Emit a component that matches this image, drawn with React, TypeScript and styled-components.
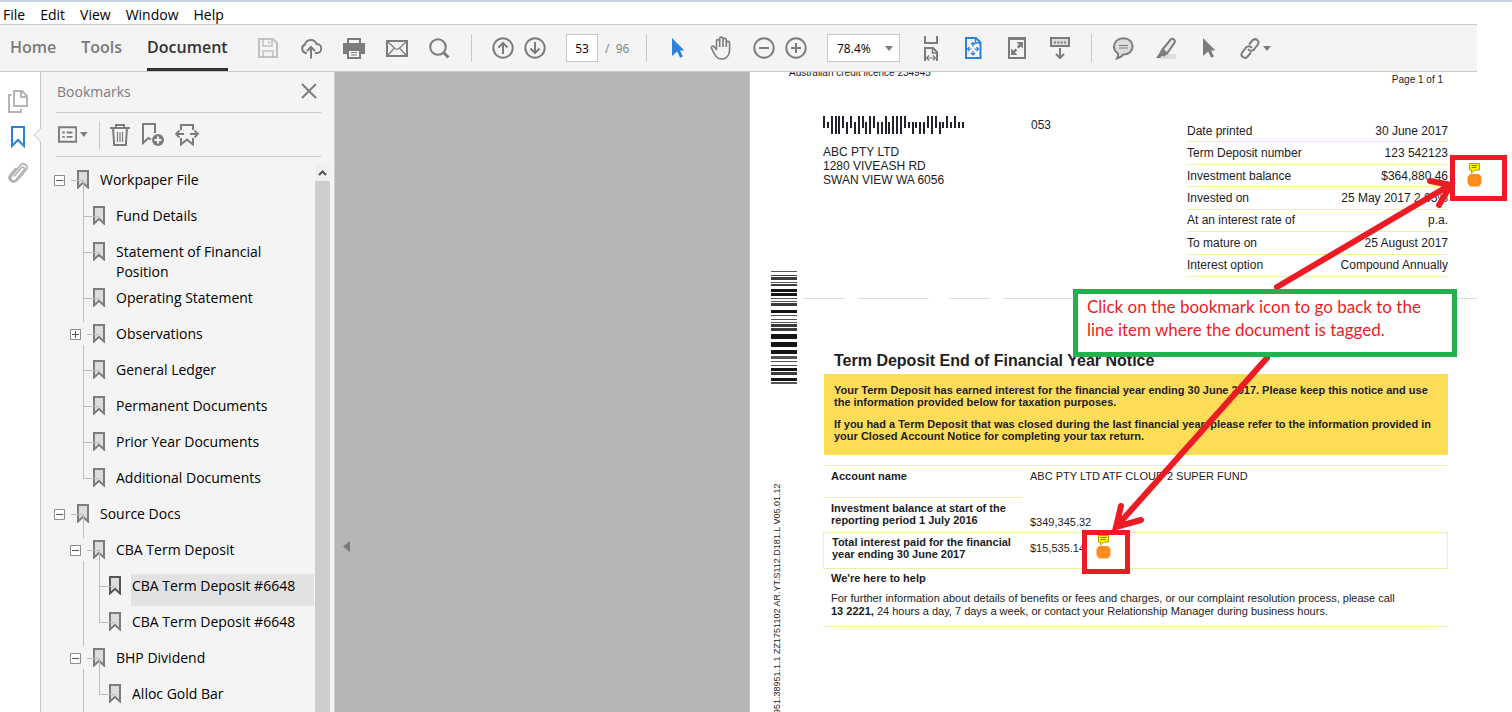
import React from "react";
import styled, { createGlobalStyle, css } from "styled-components";

const UI = '"Open Sans", "Noto Sans", sans-serif';
const DOC = '"Liberation Sans", Arial, sans-serif';

const Global = createGlobalStyle`
  * { box-sizing: border-box; }
  body { margin: 0; background: #fff; font-family: ${UI}; color: #1a1a1a; }
  button { border: 0; padding: 0; background: none; font: inherit; color: inherit; }
  a { color: inherit; text-decoration: none; }
  ul { list-style: none; margin: 0; padding: 0; }
  svg { display: block; }
`;

const Shell = styled.div`
  display: flex;
  flex-direction: column;
  height: 100vh;
  border-top: 2px solid #c7d0e3;
  overflow: hidden;
`;

const MenuBar = styled.nav`
  display: flex;
  gap: 15px;
  height: 22px;
  padding-left: 3px;
  flex: none;
`;
const MenuItem = styled.button`
  font-size: 14px;
  line-height: 26px;
  color: #000;
`;

const Toolbar = styled.header`
  display: flex;
  align-items: center;
  flex: none;
  height: 48px;
  margin-right: 35px;
  background: #f4f4f4;
  border-top: 1px solid #c8c8c8;
  border-bottom: 1px solid #c8c8c8;
`;
const Tabs = styled.div`
  display: flex;
  gap: 25px;
  width: 246px;
  padding-left: 10px;
  align-self: stretch;
`;
const Tab = styled.button<{ $active?: boolean }>`
  font-size: 16px;
  font-weight: 600;
  color: ${(p) => (p.$active ? "#323232" : "#7a7a7a")};
  border-bottom: 3px solid ${(p) => (p.$active ? "#323232" : "transparent")};
`;
const ToolGroup = styled.div`
  display: flex;
  align-items: center;
  color: #7c7c7c;
`;
const ZoomGroup = styled(ToolGroup)`
  margin-left: 5px;
`;
const Tool = styled.button<{ $w?: number; $color?: string }>`
  display: flex;
  align-items: center;
  justify-content: center;
  gap: 3px;
  width: ${(p) => p.$w ?? 43}px;
  height: 28px;
  color: ${(p) => p.$color ?? "#7c7c7c"};
`;
const Divider = styled.div<{ $l?: number; $r?: number }>`
  width: 1px;
  height: 28px;
  margin: 0 ${(p) => p.$r ?? 10}px 0 ${(p) => p.$l ?? 10}px;
  background: #c8c8c8;
`;
const PageBox = styled.input`
  width: 32px;
  height: 28px;
  margin-left: 15px;
  padding: 0;
  border: 1px solid #c8c8c8;
  background: #fff;
  text-align: center;
  font: 12px ${UI};
  color: #000;
`;
const PageTotal = styled.span`
  width: 31px;
  margin-left: 7px;
  font-size: 12px;
  color: #7c7c7c;
  white-space: pre;
`;
const ZoomField = styled.div`
  position: relative;
  display: flex;
  margin: 0 9px 0 15px;
  svg { position: absolute; right: 7px; top: 12px; pointer-events: none; }
`;
const ZoomSelect = styled.select`
  appearance: none;
  width: 73px;
  height: 28px;
  padding: 0 0 0 9px;
  border: 1px solid #c8c8c8;
  border-radius: 0;
  background: #fff;
  font: 12px ${UI};
  color: #000;
`;

const Workspace = styled.div`
  display: flex;
  flex: 1;
  min-height: 0;
`;
const Rail = styled.nav`
  position: relative;
  display: flex;
  flex-direction: column;
  align-items: center;
  flex: none;
  width: 41px;
  padding: 11px 4px 0 0;
  border-right: 1px solid #c8c8c8;
`;
const RailButton = styled.button<{ $active?: boolean }>`
  display: flex;
  align-items: center;
  justify-content: center;
  width: 26px;
  height: 36px;
  color: ${(p) => (p.$active ? "#2d82d6" : "#b4b4b4")};
`;
const Notch = styled.svg`
  position: absolute;
  right: -1px;
  top: 56px;
`;

const Panel = styled.aside`
  display: flex;
  flex-direction: column;
  flex: none;
  width: 294px;
  background: #f4f4f4;
  border-right: 1px solid #d0d0d0;
`;
const PanelHead = styled.div`
  display: flex;
  align-items: center;
  justify-content: space-between;
  height: 41px;
  margin: 0 13px 0 15px;
  padding: 0 4px 2px 1px;
  border-bottom: 1px solid #c8c8c8;
  color: #7c7c7c;
`;
const PanelTitle = styled.h2`
  margin: 0;
  font-size: 14px;
  font-weight: 400;
`;
const PanelTools = styled.div`
  display: flex;
  align-items: center;
  height: 44px;
  margin: 0 13px 0 15px;
  padding-left: 2px;
  border-bottom: 1px solid #c8c8c8;
`;
const TreeArea = styled.div`
  display: flex;
  flex: 1;
  min-height: 0;
  margin-top: 7px;
`;
const Tree = styled.div`
  flex: 1;
  padding: 4px 1px 0 13px;
  overflow: hidden;
  font-size: 14px;
`;
const ScrollTrack = styled.div`
  display: flex;
  flex-direction: column;
  width: 15px;
  margin-right: 4px;
  background: #cdcdcd;
`;
const ScrollUp = styled.button`
  display: flex;
  align-items: center;
  justify-content: center;
  height: 17px;
  background: #f0f0f0;
  color: #505050;
`;

const line = "#bdbdbd";
const Branch = styled.ul<{ $nested?: boolean }>`
  position: relative;
  ${(p) =>
    p.$nested &&
    css`
      padding-left: 16px;
      &::before {
        content: "";
        position: absolute;
        left: 29px;
        top: -24px;
        width: 1px;
        height: 24px;
        background: ${line};
      }
    `}
`;
const Node = styled.li<{ $root: boolean; $open: boolean; $last: boolean }>`
  position: relative;
  ${(p) =>
    !p.$root &&
    css`
      &::before {
        content: "";
        position: absolute;
        left: 13px;
        top: ${p.$open ? 23 : 0}px;
        width: 1px;
        ${p.$last ? "height: 13px;" : "bottom: 0;"}
        background: ${line};
      }
    `}
`;
const NodeRow = styled.div<{ $open: boolean }>`
  position: relative;
  display: flex;
  padding-bottom: 4px;
  &::after {
    content: "";
    position: absolute;
    left: ${(p) => (p.$open ? 17 : 13)}px;
    top: 12px;
    width: ${(p) => (p.$open ? 12 : 16)}px;
    height: 1px;
    background: ${line};
  }
`;
const Slot = styled.span`
  flex: none;
  width: 23px;
  padding-top: 7px;
`;
const Toggle = styled.button`
  display: block;
`;
const Label = styled.a<{ $selected?: boolean }>`
  flex: 1;
  min-height: 32px;
  margin-left: 10px;
  padding: 2px 12px 0 1px;
  line-height: 20px;
  color: #000;
  background: ${(p) => (p.$selected ? "#e2e2e2" : "transparent")};
`;

const Backdrop = styled.div`
  display: flex;
  align-items: flex-start;
  flex: 1;
  padding: 469px 0 0 8px;
  background: #b6b6b6;
`;

const rule = "#edf29a";
const Sheet = styled.main`
  position: relative;
  flex: 0 0 763px;
  padding-right: 64px;
  background: #fff;
  border-left: 1px solid #c8c8c8;
  overflow: hidden;
  font-family: ${DOC};
  font-size: 12px;
  color: #1c1c24;
`;
const SheetTop = styled.div`
  display: flex;
  justify-content: space-between;
  height: 20px;
  padding: 0 5px 0 39px;
  font-size: 10px;
`;
const Licence = styled.span`
  margin-top: -5px;
`;
const PageOf = styled.span`
  line-height: 16px;
`;
const SheetBody = styled.div`
  display: flex;
`;
const Margin = styled.div`
  flex: none;
  width: 73px;
  padding: 178px 0 0 21px;
`;
const Serial = styled.div`
  margin-top: 100px;
  writing-mode: vertical-rl;
  transform: rotate(180deg);
  font-size: 9px;
  line-height: 12px;
  height: 240px;
  white-space: nowrap;
  text-align: right;
`;
const Content = styled.div`
  flex: 1;
`;
const Letterhead = styled.div`
  display: flex;
  justify-content: space-between;
  height: 206px;
  padding-top: 24px;
`;
const Address = styled.address`
  width: 208px;
  font-style: normal;
  line-height: 14px;
  svg { margin-bottom: 11px; }
`;
const Route = styled.span`
  flex: 1;
  padding-top: 2px;
`;
const Facts = styled.table`
  width: 261px;
  height: 157px;
  margin-top: 4px;
  border-spacing: 0;
  th, td {
    padding: 0;
    border-bottom: 1px solid ${rule};
    font-weight: 400;
    text-align: left;
  }
  td { text-align: right; }
`;
const NoticeTitle = styled.h1`
  margin: 0;
  padding: 52px 0 3px 11px;
  font-size: 16px;
  line-height: 21px;
  color: #222;
`;
const Notice = styled.div`
  height: 81px;
  margin-left: 1px;
  padding: 10px;
  background: #fddd58;
  font-size: 11px;
  font-weight: 700;
  line-height: 12px;
  white-space: nowrap;
  p { margin: 0 0 10px; }
`;
const Account = styled.table`
  width: 100%;
  margin-top: 10px;
  border-spacing: 0;
  font-size: 11px;
  line-height: 12px;
  th { width: 199px; text-align: left; }
`;
const AccountRow = styled.tr<{ $h: number; $kind?: "short" | "boxed" }>`
  height: ${(p) => p.$h}px;
  th, td {
    padding: 4px 0 0 8px;
    border-top: 1px solid ${rule};
    vertical-align: top;
  }
  ${(p) =>
    p.$kind === "short" &&
    css`
      td { border-top-color: transparent; padding-top: 18px; }
    `}
  ${(p) =>
    p.$kind === "boxed" &&
    css`
      th, td { border-bottom: 1px solid ${rule}; padding-top: 3px; }
      th { border-left: 1px solid ${rule}; }
      td { border-right: 1px solid ${rule}; padding-top: 9px; }
    `}
`;
const Help = styled.section`
  padding: 3px 0 8px 8px;
  border-bottom: 1px solid ${rule};
  font-size: 11px;
  line-height: 13px;
  h2 { margin: 0 0 7px; font-size: 11px; line-height: 13px; }
  p { margin: 0; }
`;

const Overlay = styled.svg`
  position: absolute;
  left: 0;
  top: 0;
  pointer-events: none;
`;
const Marker = styled.button<{ $x: number; $y: number; $w: number; $h: number; $pad: string }>`
  position: absolute;
  display: flex;
  align-items: flex-start;
  left: ${(p) => p.$x}px;
  top: ${(p) => p.$y}px;
  width: ${(p) => p.$w}px;
  height: ${(p) => p.$h}px;
  padding: ${(p) => p.$pad};
  border: 5px solid #ed1c24;
  background: #fff;
`;
const Callout = styled.div`
  position: absolute;
  left: 323px;
  top: 217px;
  width: 384px;
  height: 68px;
  padding: 1px 9px;
  border: 5px solid #22b14c;
  background: #fff;
  color: #ed1c24;
  font: 17px/23px Lato, sans-serif;
`;

type IconProps = { w: number; h: number; children: React.ReactNode; s?: number };
const Icon = ({ w, h, s = 2, children }: IconProps) => (
  <svg width={w} height={h} viewBox={`0 0 ${w} ${h}`} fill="none" stroke="currentColor" strokeWidth={s} aria-hidden="true">
    {children}
  </svg>
);
const Caret = () => (
  <svg width="8" height="5" viewBox="0 0 8 5" aria-hidden="true">
    <path d="M0 0h8L4 5z" fill="#7c7c7c" />
  </svg>
);
const SaveIcon = () => (
  <Icon w={20} h={20}>
    <path d="M1 1h14l4 4v14H1z" />
    <path d="M5 1v7h9V1M5 19v-6h10v6M11 3v3" strokeWidth={1.5} />
  </Icon>
);
const CloudIcon = () => (
  <Icon w={22} h={21}>
    <path d="M7 15H5.500A4.500 4.500 0 0 1 5 6.500 6 6 0 0 1 16.500 6 4.500 4.500 0 0 1 17 15h-2" />
    <path d="M11 20.500V9M7 13l4-4 4 4" />
  </Icon>
);
const PrintIcon = () => (
  <Icon w={22} h={21}>
    <path d="M4 0h14v5H4zM0 7h22v9h-4v-3H4v3H0z" fill="currentColor" stroke="none" />
    <path d="M5 1h12v5H5z" fill="#f4f4f4" />
    <path d="M1 6h20v9H1z" fill="currentColor" />
    <path d="M5 12h12v8H5z" fill="#f4f4f4" />
    <path d="M8 14.500h6M8 17h6" strokeWidth={1} />
  </Icon>
);
const MailIcon = () => (
  <Icon w={22} h={17}>
    <path d="M1 1h20v15H1z" />
    <path d="M2 2l7 6.500q2 1.500 4 0L20 2M2 15l6.500-7M20 15l-6.500-7" strokeWidth={1.200} />
  </Icon>
);
const SearchIcon = () => (
  <Icon w={21} h={21}>
    <circle cx="9" cy="9" r="7.800" />
    <path d="M14.500 14.500l5 5" strokeWidth={3} />
  </Icon>
);
const Round = ({ d }: { d: string }) => (
  <Icon w={22} h={22}>
    <circle cx="11" cy="11" r="9.700" />
    <path d={d} />
  </Icon>
);
const PointerIcon = () => (
  <svg width="13" height="20" viewBox="0 0 13 20" aria-hidden="true">
    <path d="M0 0l12.500 12.500H8l3 6-2.800 1.300-3-6.300L0 18z" fill="currentColor" />
  </svg>
);
const HandIcon = () => (
  <Icon w={23} h={24} s={1.600}>
    <path d="M6.500 14V5.200a1.600 1.600 0 0 1 3.200 0V11M9.700 5V2.800a1.600 1.600 0 0 1 3.300 0V11M13 4a1.600 1.600 0 0 1 3.300 0v7M16.300 7a1.600 1.600 0 0 1 3.300 0" />
    <path d="M6.500 13.500l-2.300-2.800c-1.200-1.300-3.300-.2-2.700 1.400 1.700 3.800 3.300 7.500 5.800 9.500 2.500 1.800 6.500 1.800 9 0 2.800-2.200 3.300-5.200 3.300-8.500V7" />
  </Icon>
);
const FitWidthIcon = () => (
  <Icon w={16} h={25}>
    <path d="M2 0v7h12V0M2 25V12h8l4 4v9" />
    <path d="M9.500 12v5H14" strokeWidth={1.500} />
    <path d="M4 22h8M6 19.500L3.500 22 6 24.500M10 19.500l2.500 2.500-2.500 2.500" strokeWidth={1.200} />
  </Icon>
);
const FitPageIcon = () => (
  <Icon w={17} h={22}>
    <path d="M1 1h10l4.500 4.500V21H1z" />
    <path d="M10.500 1v5h5" strokeWidth={1.500} />
    <path d="M8 5.500v4M8 14v4M2.500 12h4M9.500 12h4M6 7.500l2-2 2 2M6 16l2 2 2-2M4.500 10l-2 2 2 2M11.500 10l2 2-2 2" strokeWidth={1.200} />
  </Icon>
);
const FullIcon = () => (
  <Icon w={18} h={22}>
    <path d="M1 1h16v20H1z" />
    <path d="M1 1.500h16" strokeWidth={3} />
    <path d="M15 5v6.500L12.700 9.300 10.500 11.500 8.800 9.800 11 7.500 8.500 5zM3 18v-6.500l2.300 2.200 2.200-2.200 1.700 1.700L7 15.500 9.500 18z" fill="currentColor" stroke="none" />
  </Icon>
);
const ScrollIcon = () => (
  <Icon w={20} h={22}>
    <path d="M1 1h18v8H1z" fill="#ddd" />
    <path d="M4 5.500h12" strokeDasharray="2 1.300" />
    <path d="M10 11v10M6 17l4 4 4-4" />
  </Icon>
);
const CommentIcon = () => (
  <Icon w={21} h={23}>
    <path d="M10.500 1.200c5.300 0 9 3.700 9 8.300s-3.700 8-9 8c-1.700 1.700-3.800 3.500-6.500 4 1-1.500 1.300-3 1-5-2.300-1.500-4-3.700-4-7 0-4.600 4-8.300 9.500-8.300z" fill="#ddd" />
    <path d="M6 8.500h9M6 11h9" strokeWidth={1.200} />
  </Icon>
);
const PenIcon = () => (
  <Icon w={21} h={22}>
    <path d="M7 17h13v5H2z" fill="#ddd" stroke="none" />
    <path d="M6.500 12.500L14.500 2.800c2.300-2 5.300-.5 4 3L11 16.500z" fill="#e8e8e8" />
    <path d="M5 12.500l6 4.500-2.500 2.500-3-.5-1.500 2H0l3.500-5z" fill="currentColor" stroke="none" />
  </Icon>
);
const LinkIcon = () => (
  <Icon w={20} h={21}>
    <path d="M9 6.500l3.500-4.200c3-3 7.800.8 5.300 4.200l-3.800 5c-2 2-4.500 1.500-6-.5M11 14.500l-3.500 4.200c-3 3-7.800-.8-5.300-4.200L6 9.500c2-2 4.500-1.500 6 .5" />
  </Icon>
);
const PagesIcon = () => (
  <Icon w={20} h={23}>
    <path d="M6 1h8l5 5v10H6zM13 1v6h6M3.500 5H1v17h12v-3" />
  </Icon>
);
const ClipIcon = () => (
  <Icon w={20} h={22}>
    <path d="M6 14.500l7-8.500c2-2 4.500.2 3 2.300l-8 9.500c-3 3-7-.5-4.500-3.800L12 3.500c3.500-4 9 .5 6 4.500l-8.500 10c-4.500 5-10.500-.5-7.500-5L8 6" strokeWidth={1.800} />
  </Icon>
);
const BookmarkIcon = () => (
  <Icon w={14} h={22}>
    <path d="M1 1h12v19l-6-6-6 6z" />
  </Icon>
);
const NodeIcon = ({ dark }: { dark?: boolean }) => (
  <svg width="12" height="21" viewBox="0 0 12 21" fill="#dcdcdc" stroke={dark ? "#555" : "#7c7c7c"} strokeWidth="2" aria-hidden="true">
    <path d="M1 3h10v16.500L6 14.800 1 19.500z" />
  </svg>
);
const ToggleIcon = ({ plus }: { plus?: boolean }) => (
  <svg width="11" height="11" viewBox="0 0 11 11" fill="#fff" aria-hidden="true">
    <path d="M.5.5h10v10H.5z" stroke="#8e8e8e" />
    <path d={plus ? "M2 5.500h7M5.500 2v7" : "M2 5.500h7"} stroke="#555" />
  </svg>
);
const ListIcon = () => (
  <Icon w={20} h={17}>
    <path d="M1 1h18v15H1z" />
    <path d="M9 6.500h6M9 11h6M4.500 6.500h2.500M4.500 11h2.500" />
  </Icon>
);
const TrashIcon = () => (
  <Icon w={20} h={22}>
    <path d="M0 4h20M6 4V1h8v3M3 4l1.200 17h11.600L17 4" />
    <path d="M7.500 8v10M10 8v10M12.500 8v10" strokeWidth={1.200} />
  </Icon>
);
const AddMarkIcon = () => (
  <Icon w={22} h={23}>
    <path d="M9 16.500L6.500 15 1 20V1h12v9" />
    <circle cx="16" cy="17" r="6" fill="currentColor" stroke="none" />
    <path d="M16 13.500v7M12.500 17h7" stroke="#f4f4f4" />
  </Icon>
);
const SpreadIcon = () => (
  <Icon w={24} h={22}>
    <path d="M6 6V1h12v5M6 14v6.500l6-5 6 5V14" />
    <path d="M1 10h8M15 10h8M4.500 6.500L1 10l3.500 3.500M19.500 6.500L23 10l-3.500 3.500" strokeWidth={1.800} />
  </Icon>
);
const TagIcon = () => (
  <svg width="16" height="24" viewBox="0 0 16 24" aria-hidden="true">
    <path d="M2.500.5h10v6.500H8L4.500 10V7h-2z" fill="#fff200" stroke="#b0a000" />
    <path d="M4.500 2.500h6M4.500 4.500h5" stroke="#8a7d00" />
    <path d="M3 11h9l2.500 3v6L12 23.500H3L.5 20v-6z" fill="#ff8c1a" />
  </svg>
);

const bars = "ATFFFADADFADFADDFDFFFATDTDDAFADTATATT".split("");
const PostalCode = () => (
  <svg width="141" height="18" viewBox="0 0 141 18" aria-label="Postal barcode" role="img">
    {bars.map((b, i) => {
      const top = b === "F" || b === "A" ? 0 : 6;
      const end = b === "F" || b === "D" ? 18 : 12;
      return <rect key={i} x={Math.round(i * 3.85)} y={top} width="2" height={end - top} fill="#222230" />;
    })}
  </svg>
);
const stripes: [number, number, number][] = [
  [1, 1, 0], [5, 1, 1], [7, 3, 1], [12, 1, 0], [14, 2, 1], [19, 3, 2], [23, 3, 2], [28, 1, 0], [31, 1, 0], [33, 3, 1],
  [40, 3, 2], [45, 1, 0], [49, 1, 0], [52, 1, 0], [54, 3, 1], [58, 3, 1], [64, 5, 2], [72, 5, 2], [80, 4, 2], [86, 3, 0],
  [91, 1, 0], [95, 1, 0], [98, 3, 2], [102, 3, 1], [108, 3, 2], [112, 2, 0],
];
const SideCode = () => (
  <svg width="26" height="114" viewBox="0 0 26 114" aria-label="Document barcode" role="img">
    {stripes.map(([y, h, t]) => (
      <rect key={y} x="0" y={y} width="26" height={h} fill={["#555", "#3c3c3c", "#151515"][t]} />
    ))}
  </svg>
);

type TreeNode = { label: string; open?: boolean; selected?: boolean; children?: TreeNode[] };
const bookmarks: TreeNode[] = [
  {
    label: "Workpaper File",
    open: true,
    children: [
      { label: "Fund Details" },
      { label: "Statement of Financial Position" },
      { label: "Operating Statement" },
      { label: "Observations", open: false },
      { label: "General Ledger" },
      { label: "Permanent Documents" },
      { label: "Prior Year Documents" },
      { label: "Additional Documents" },
    ],
  },
  {
    label: "Source Docs",
    open: true,
    children: [
      { label: "CBA Term Deposit", open: true, children: [{ label: "CBA Term Deposit #6648", selected: true }, { label: "CBA Term Deposit #6648" }] },
      { label: "BHP Dividend", open: true, children: [{ label: "Alloc Gold Bar" }] },
    ],
  },
];
const TreeList = ({ nodes, root = false }: { nodes: TreeNode[]; root?: boolean }) => (
  <Branch $nested={!root}>
    {nodes.map((n, i) => {
      const expandable = n.open !== undefined;
      return (
        <Node key={i} $root={root} $open={expandable} $last={!expandable && i === nodes.length - 1}>
          <NodeRow $open={expandable}>
            <Slot>
              {expandable && (
                <Toggle aria-label={n.open ? "Collapse" : "Expand"}>
                  <ToggleIcon plus={!n.open} />
                </Toggle>
              )}
            </Slot>
            <NodeIcon dark={n.selected} />
            <Label href="#" $selected={n.selected}>
              {n.label}
            </Label>
          </NodeRow>
          {n.children && <TreeList nodes={n.children} />}
        </Node>
      );
    })}
  </Branch>
);

const facts = [
  ["Date printed", "30 June 2017"],
  ["Term Deposit number", "123 542123"],
  ["Investment balance", "$364,880.46"],
  ["Invested on", "25 May 2017 2.65%"],
  ["At an interest rate of", "p.a."],
  ["To mature on", "25 August 2017"],
  ["Interest option", "Compound Annually"],
];

export default function App() {
  return (
    <Shell>
      <Global />
      <MenuBar aria-label="Menu">
        {["File", "Edit", "View", "Window", "Help"].map((m) => (
          <MenuItem key={m}>{m}</MenuItem>
        ))}
      </MenuBar>
      <Toolbar>
        <Tabs>
          <Tab>Home</Tab>
          <Tab>Tools</Tab>
          <Tab $active>Document</Tab>
        </Tabs>
        <ToolGroup>
          <Tool aria-label="Save" $color="#c0c0c0"><SaveIcon /></Tool>
          <Tool aria-label="Upload"><CloudIcon /></Tool>
          <Tool aria-label="Print"><PrintIcon /></Tool>
          <Tool aria-label="Email"><MailIcon /></Tool>
          <Tool aria-label="Search"><SearchIcon /></Tool>
        </ToolGroup>
        <Divider $r={15} />
        <ToolGroup>
          <Tool $w={32} aria-label="Previous page"><Round d="M11 17V6M6.500 10.500L11 6l4.500 4.500" /></Tool>
          <Tool $w={32} aria-label="Next page"><Round d="M11 5v11M6.500 11.500L11 16l4.500-4.500" /></Tool>
          <PageBox aria-label="Page number" defaultValue="53" />
          <PageTotal>/  96</PageTotal>
        </ToolGroup>
        <Divider />
        <ToolGroup>
          <Tool aria-label="Select" $color="#2d82d6"><PointerIcon /></Tool>
          <Tool aria-label="Pan"><HandIcon /></Tool>
        </ToolGroup>
        <ZoomGroup>
          <Tool $w={32} aria-label="Zoom out"><Round d="M6 11h10" /></Tool>
          <Tool $w={32} aria-label="Zoom in"><Round d="M6 11h10M11 6v10" /></Tool>
          <ZoomField>
            <ZoomSelect aria-label="Zoom level" defaultValue="78.4%">
              <option>78.4%</option>
              <option>100%</option>
            </ZoomSelect>
            <Caret />
          </ZoomField>
        </ZoomGroup>
        <ToolGroup>
          <Tool aria-label="Fit width"><FitWidthIcon /></Tool>
          <Tool aria-label="Fit page" $color="#2d82d6"><FitPageIcon /></Tool>
          <Tool aria-label="Full screen"><FullIcon /></Tool>
          <Tool aria-label="Scroll mode"><ScrollIcon /></Tool>
        </ToolGroup>
        <Divider />
        <ToolGroup>
          <Tool aria-label="Comment"><CommentIcon /></Tool>
          <Tool aria-label="Highlight"><PenIcon /></Tool>
          <Tool aria-label="Pointer"><PointerIcon /></Tool>
          <Tool $w={48} aria-label="Link"><LinkIcon /><Caret /></Tool>
        </ToolGroup>
      </Toolbar>
      <Workspace>
        <Rail aria-label="Side panels">
          <RailButton aria-label="Pages"><PagesIcon /></RailButton>
          <RailButton aria-label="Bookmarks" $active><BookmarkIcon /></RailButton>
          <RailButton aria-label="Attachments"><ClipIcon /></RailButton>
          <Notch width="8" height="14" viewBox="0 0 8 14" aria-hidden="true">
            <path d="M8 0L1 7l7 7" fill="#f4f4f4" stroke="#c8c8c8" />
          </Notch>
        </Rail>
        <Panel>
          <PanelHead>
            <PanelTitle>Bookmarks</PanelTitle>
            <button aria-label="Close">
              <Icon w={16} h={16}><path d="M1 1l14 14M15 1L1 15" /></Icon>
            </button>
          </PanelHead>
          <PanelTools>
            <Tool $w={30} aria-label="Options"><ListIcon /><Caret /></Tool>
            <Divider $l={11} $r={5} />
            <Tool $w={30} aria-label="Delete"><TrashIcon /></Tool>
            <Tool $w={36} aria-label="New bookmark"><AddMarkIcon /></Tool>
            <Tool $w={32} aria-label="Expand current"><SpreadIcon /></Tool>
          </PanelTools>
          <TreeArea>
            <Tree><TreeList nodes={bookmarks} root /></Tree>
            <ScrollTrack>
              <ScrollUp aria-label="Scroll up">
                <Icon w={9} h={6}><path d="M1 5l3.500-3.500L8 5" /></Icon>
              </ScrollUp>
            </ScrollTrack>
          </TreeArea>
        </Panel>
        <Backdrop>
          <button aria-label="Hide panel">
            <svg width="7" height="11" viewBox="0 0 7 11"><path d="M7 0v11L0 5.500z" fill="#7c7c7c" /></svg>
          </button>
        </Backdrop>
        <Sheet>
          <SheetTop>
            <Licence>Australian credit licence 234945</Licence>
            <PageOf>Page 1 of 1</PageOf>
          </SheetTop>
          <SheetBody>
            <Margin>
              <SideCode />
              <Serial>38951.38951.1.1 ZZ1751102 AR.YT.S112.D181.L V05.01.12</Serial>
            </Margin>
            <Content>
              <Letterhead>
                <Address>
                  <PostalCode />
                  ABC PTY LTD<br />1280 VIVEASH RD<br />SWAN VIEW WA 6056
                </Address>
                <Route>053</Route>
                <Facts>
                  <tbody>
                    {facts.map(([k, v]) => (
                      <tr key={k}><th scope="row">{k}</th><td>{v}</td></tr>
                    ))}
                  </tbody>
                </Facts>
              </Letterhead>
              <NoticeTitle>Term Deposit End of Financial Year Notice</NoticeTitle>
              <Notice>
                <p>Your Term Deposit has earned interest for the financial year ending 30 June 2017. Please keep this notice and use<br />the information provided below for taxation purposes.</p>
                <p>If you had a Term Deposit that was closed during the last financial year, please refer to the information provided in<br />your Closed Account Notice for completing your tax return.</p>
              </Notice>
              <Account>
                <tbody>
                  <AccountRow $h={32}><th scope="row">Account name</th><td>ABC PTY LTD ATF CLOUD 2 SUPER FUND</td></AccountRow>
                  <AccountRow $h={35} $kind="short"><th scope="row">Investment balance at start of the<br />reporting period 1 July 2016</th><td>$349,345.32</td></AccountRow>
                  <AccountRow $h={37} $kind="boxed"><th scope="row">Total interest paid for the financial<br />year ending 30 June 2017</th><td>$15,535.14</td></AccountRow>
                </tbody>
              </Account>
              <Help>
                <h2>We're here to help</h2>
                <p>For further information about details of benefits or fees and charges, or our complaint resolution process, please call<br /><b>13 2221,</b> 24 hours a day, 7 days a week, or contact your Relationship Manager during business hours.</p>
              </Help>
            </Content>
          </SheetBody>
          <Marker $x={700} $y={83} $w={57} $h={46} $pad="3px 0 0 12px" aria-label="Go to tagged line"><TagIcon /></Marker>
          <Marker $x={332} $y={458} $w={48} $h={44} $pad="0 0 0 9px" aria-label="Go to tagged line"><TagIcon /></Marker>
          <Overlay width="763" height="640" viewBox="0 0 763 640" fill="none" stroke="#ed1c24" strokeWidth="6" strokeLinecap="round" aria-hidden="true">
            <path d="M54 226.500H727" stroke="#ddd" strokeWidth="1" strokeDasharray="40 14 70 22" />
            <path d="M527 215L700 113M680 109l21 4-12 20M517 286L366 455M371 434l-5 21 25-7" />
          </Overlay>
          <Callout>Click on the bookmark icon to go back to the<br />line item where the document is tagged.</Callout>
        </Sheet>
      </Workspace>
    </Shell>
  );
}
